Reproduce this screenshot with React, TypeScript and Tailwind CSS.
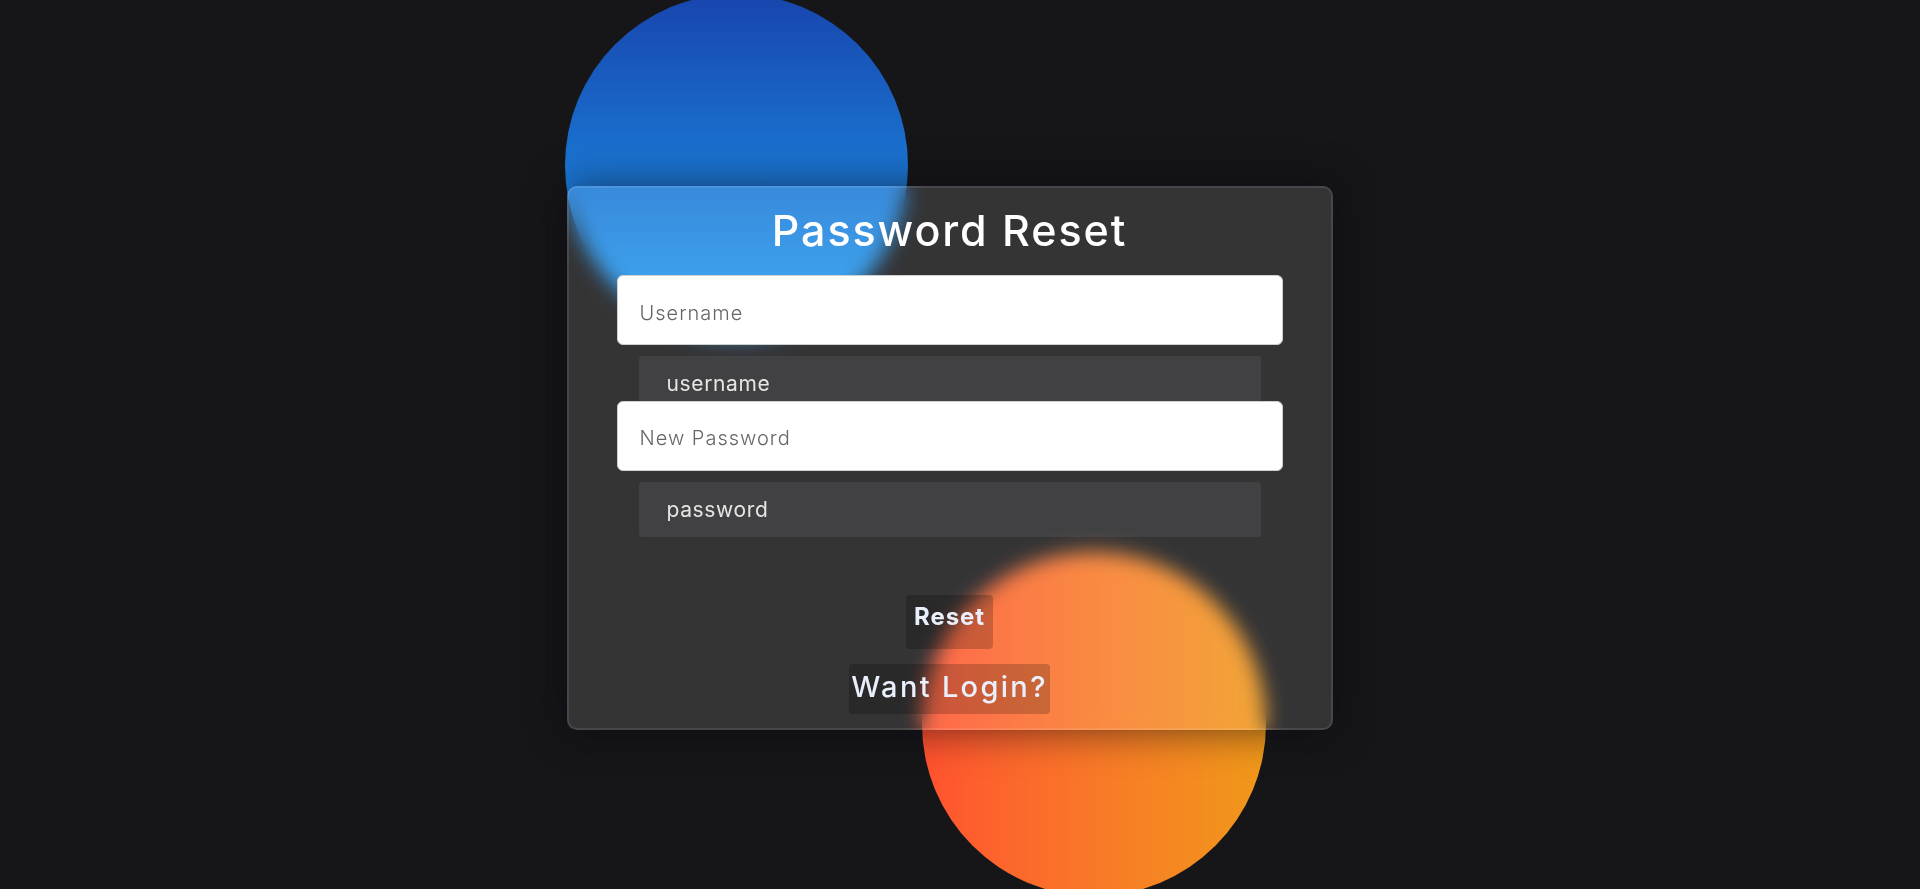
export default function App() {
  return (
    <div className="min-h-screen bg-[#161618] flex justify-center pr-[21px] pt-[186px] pb-[166px] font-['Inter',sans-serif]">
      <div className="relative w-[766px]">
        {/* Shapes behind the glass card */}
        <div className="absolute left-[-2px] top-[-192px] w-[343px] h-[343px] rounded-full bg-linear-to-b from-[#1845ad] to-[#23a2f6]" />
        <div className="absolute left-[355px] top-[366px] w-[344px] h-[344px] rounded-full bg-linear-to-r from-[#ff512f] to-[#f09819]" />

        {/* Card */}
        <form className="relative h-[544px] rounded-[10px] border-2 border-[rgba(255,255,255,0.1)] bg-[rgba(255,255,255,0.13)] backdrop-blur-[10px] shadow-[0_0_40px_rgba(8,7,16,0.6)] px-[48px] pt-[16px] flex flex-col">
          <h3 className="text-center text-white text-[43px] leading-[52px] font-medium tracking-[0.045em]">
            Password Reset
          </h3>

          <label className="relative mt-[19px] h-[70px] rounded-[6px] border border-[#cfcfcf] bg-white flex items-center pl-[22px] pt-[6px] text-[20px] font-light tracking-[0.05em] text-[#666666]">
            Username
          </label>
          <div className="mx-[22px] mt-[11px] h-[55px] rounded-[3px] bg-[rgba(255,255,255,0.07)] flex items-center pl-[28px] text-[21px] tracking-[0.03em] text-[#e5e5e5]">
            username
          </div>

          <label className="relative mt-[-10px] h-[70px] rounded-[6px] border border-[#cfcfcf] bg-white flex items-center pl-[22px] pt-[4px] text-[20px] font-light tracking-[0.05em] text-[#666666]">
            New Password
          </label>
          <div className="mx-[22px] mt-[11px] h-[55px] rounded-[3px] bg-[rgba(255,255,255,0.07)] flex items-center pl-[28px] text-[21px] tracking-[0.03em] text-[#e5e5e5]">
            password
          </div>

          {/* Actions */}
          <button
            type="button"
            className="self-center mt-[58px] h-[54px] px-[8px] pt-[7px] flex items-start rounded-[4px] bg-[rgba(0,0,0,0.2)] text-[24px] leading-[29px] font-bold tracking-[0.04em] text-[#eaf0fb]"
          >
            Reset
          </button>
          <button
            type="button"
            className="self-center mt-[15px] h-[50px] px-[2px] pt-[5px] flex items-start rounded-[4px] bg-[rgba(0,0,0,0.2)] text-[29px] leading-[35px] font-medium tracking-[0.08em] text-[#eaf0fb]"
          >
            Want Login?
          </button>
        </form>
      </div>
    </div>
  )
}
